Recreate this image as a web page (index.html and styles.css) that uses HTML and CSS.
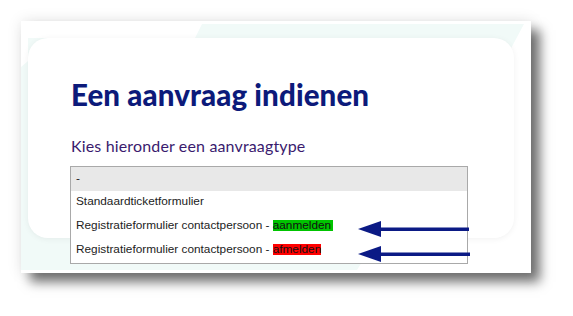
FILE: index.html
```html
<!DOCTYPE html>
<html>
<head>
<meta charset="utf-8">
<link rel="stylesheet" href="styles.css">
</head>
<body>
<div class="frame">
  <svg class="deco" width="510" height="252" viewBox="0 0 510 252">
    <polygon points="181,3 503,3 486,35 360,210 336,249 0,249 0,46 7,40 7,17 174,17" fill="#f1faf8"/>
  </svg>
  <div class="card">
    <h1 class="title">Een aanvraag indienen</h1>
    <p class="label">Kies hieronder een aanvraagtype</p>
    <div class="select">
      <div class="opt opt-sel">-</div>
      <div class="opt">Standaardticketformulier</div>
      <div class="opt">Registratieformulier contactpersoon - <span class="hl hl-green">aanmelden</span></div>
      <div class="opt">Registratieformulier contactpersoon - <span class="hl hl-red">afmelden</span></div>
    </div>
  </div>
  <svg class="arrows" width="510" height="252" viewBox="0 0 510 252">
    <g fill="#0b1a85">
      <rect x="358" y="206.5" width="90" height="3.5"/>
      <polygon points="337,208 360,200 360,216"/>
      <rect x="358" y="231.5" width="91" height="3.5"/>
      <polygon points="337,233 360,225 360,241"/>
    </g>
  </svg>
</div>
</body>
</html>
```

FILE: styles.css
```css
html, body {
  margin: 0;
  padding: 0;
  background: #ffffff;
}

body {
  width: 573px;
  height: 316px;
  overflow: hidden;
}

.frame {
  position: relative;
  margin: 21px 0 0 21px;
  width: 510px;
  height: 252px;
  background: #ffffff;
  box-shadow: 9px 9px 11px rgba(0, 0, 0, 0.55), 0 0 14px rgba(0, 0, 0, 0.10);
  padding: 17px 17px 0 7px;
  box-sizing: border-box;
}

.deco {
  position: absolute;
  left: 0;
  top: 0;
}

.arrows {
  position: absolute;
  left: 0;
  top: 0;
}

.card {
  position: relative;
  height: 200px;
  background: #ffffff;
  border-radius: 20px;
  box-shadow: 0 1px 6px rgba(0, 0, 0, 0.06);
  padding: 40px 0 0 43px;
  box-sizing: border-box;
}

.title {
  margin: 0;
  font-family: "Lato", sans-serif;
  font-weight: 900;
  font-size: 29.5px;
  line-height: 34px;
  color: #0c1a7a;
  letter-spacing: 0.1px;
}

.label {
  margin: 24px 0 0 0;
  font-family: "Lato", sans-serif;
  font-weight: 400;
  font-size: 16px;
  line-height: 20px;
  color: #3a1b6e;
  letter-spacing: 0.15px;
}

.select {
  margin: 10px 0 0 -1px;
  width: 398px;
  height: 98px;
  border: 1px solid #a9a9a9;
  box-sizing: border-box;
  background: #ffffff;
  font-family: "Liberation Sans", Arial, sans-serif;
  font-size: 11.8px;
  color: #222222;
}

.opt {
  height: 24px;
  line-height: 21px;
  padding-left: 5px;
  white-space: nowrap;
}

.opt-sel {
  background: #e8e8e8;
  line-height: 23px;
}

.hl {
  display: inline-block;
  height: 11px;
  line-height: 11px;
  color: #111111;
}

.hl-green {
  background: #00c400;
  padding-right: 2px;
}

.hl-red {
  background: #ff0000;
}
```
